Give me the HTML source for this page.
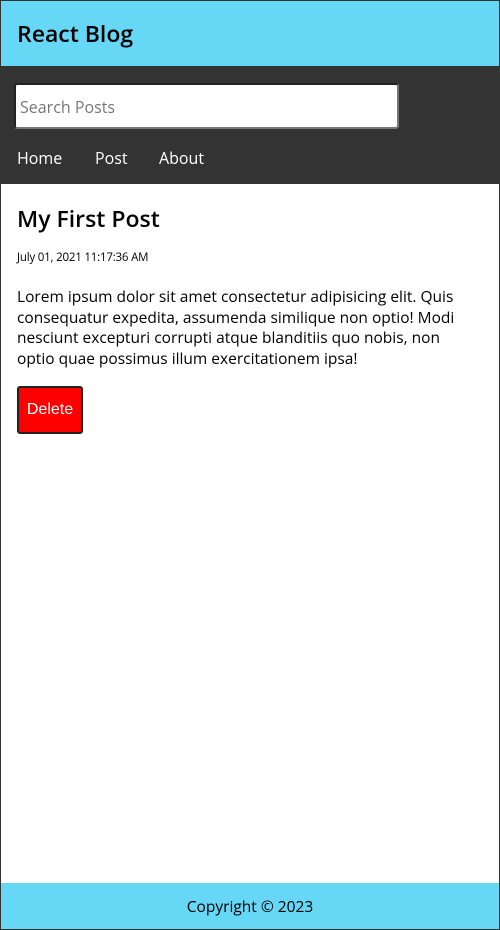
<!DOCTYPE html>
<html><head><style>
*{margin:0;padding:0;box-sizing:border-box}
body{width:500px;height:930px;font-family:"Open Sans","DejaVu Sans","Liberation Sans",sans-serif;background:#fff;position:relative;overflow:hidden}
.wrap{position:absolute;inset:0;border:1px solid #333}
header{position:absolute;left:0;top:0;width:498px;height:65px;background:#66d8f5}
header h1{position:absolute;left:16px;top:17px;font-size:23px;font-weight:600;line-height:30px}
nav{position:absolute;left:0;top:65px;width:498px;height:118px;background:#333}
.search{position:absolute;left:13px;top:17px;width:385px;height:46px;background:#fff;border:2px solid #222;border-bottom-color:#777;border-right-color:#777;border-radius:3px}
.search span{position:absolute;left:4px;top:11px;font-size:16px;color:#777}
.links{position:absolute;top:81px;left:16px;color:#fff;font-size:16px}
.links span{position:absolute;white-space:nowrap}
main h2{position:absolute;left:16px;top:201px;font-size:23px;font-weight:600;line-height:32px}
.date{position:absolute;left:16px;top:249px;font-size:11.5px;letter-spacing:-0.2px}
.body{position:absolute;left:16px;top:285px;width:458px;font-size:15.5px;line-height:20.5px}
button{position:absolute;left:16px;top:385px;width:66px;height:48px;background:#f00;color:#fff;border:2px solid #222;border-radius:3px;font-family:"Liberation Sans",sans-serif;font-size:16px}
footer{position:absolute;left:0;top:882px;width:498px;height:46px;background:#66d8f5;text-align:center;font-size:15.5px;line-height:46px}
</style></head><body><div class="wrap">
<header><h1>React Blog</h1></header>
<nav><div class="search"><span>Search Posts</span></div>
<div class="links"><span style="left:0">Home</span><span style="left:78px">Post</span><span style="left:142px">About</span></div></nav>
<main><h2>My First Post</h2>
<p class="date">July 01, 2021 11:17:36 AM</p>
<p class="body">Lorem ipsum dolor sit amet consectetur adipisicing elit. Quis consequatur expedita, assumenda similique non optio! Modi nesciunt excepturi corrupti atque blanditiis quo nobis, non optio quae possimus illum exercitationem ipsa!</p>
<button>Delete</button></main>
<footer>Copyright © 2023</footer>
</div></body></html>
